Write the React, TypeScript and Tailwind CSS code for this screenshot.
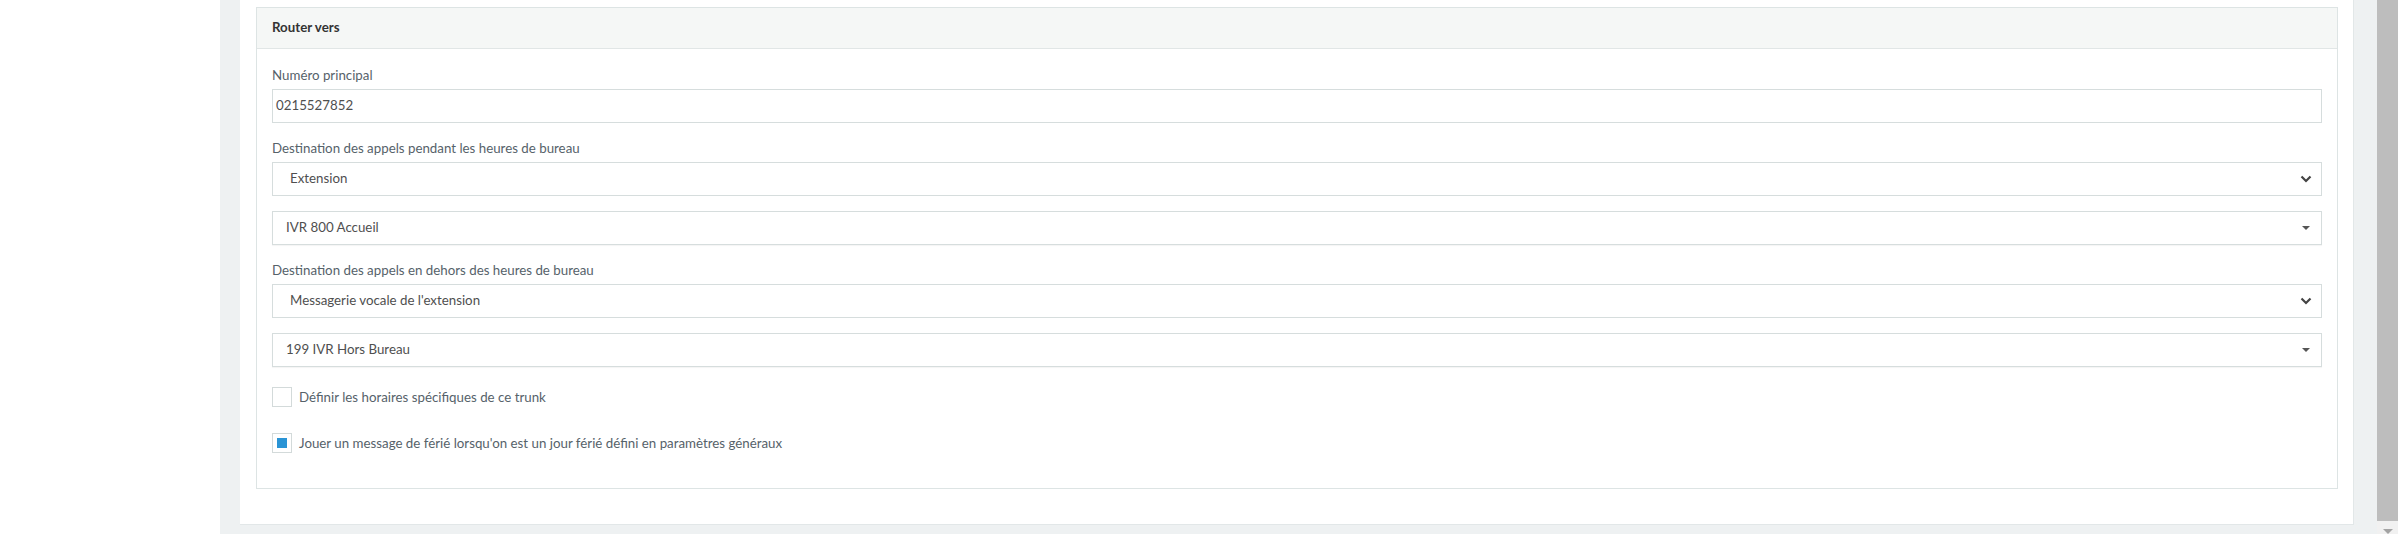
import React from 'react'

const font = { fontFamily: 'Lato, "Liberation Sans", sans-serif' }

const Chevron = () => (
    <svg width="12" height="8" viewBox="0 0 12 8" className="shrink-0">
        <polyline points="1.5,1.5 6,6 10.5,1.5" fill="none" stroke="#444" strokeWidth="2.2" />
    </svg>
)

const Caret = () => (
    <svg width="8" height="4" viewBox="0 0 8 4" className="shrink-0">
        <polygon points="0,0 8,0 4,4" fill="#555" />
    </svg>
)

const Label = ({ children }: { children: React.ReactNode }) => (
    <div className="text-[13.3px] leading-[18px] text-[#56626a] mb-[5px]">{children}</div>
)

const NativeSelect = ({ value }: { value: string }) => (
    <div className="h-[34px] border border-[#d6dddd] bg-white flex items-center justify-between pl-[17px] pr-[9px] text-[13.3px] text-[#4f4f4f]">
        <span>{value}</span>
        <Chevron />
    </div>
)

const Select2 = ({ value }: { value: string }) => (
    <div className="h-[34px] border border-[#d6dddd] bg-white flex items-center justify-between pl-[13px] pr-[11px] text-[13.3px] text-[#4f4f4f] shadow-[0_1px_1px_rgba(0,0,0,0.04)]">
        <span>{value}</span>
        <Caret />
    </div>
)

const Checkbox = ({ checked, label }: { checked?: boolean; label: string }) => (
    <div className="flex items-center gap-[7px] h-[20px]">
        <div className="w-[20px] h-[20px] shrink-0 border border-[#d3dada] bg-white flex items-center justify-center">
            {checked && <div className="w-[10px] h-[10px] bg-[#2a94d5]" />}
        </div>
        <span className="text-[13.3px] leading-[18px] text-[#56626a]">{label}</span>
    </div>
)

export default function App() {
    return (
        <div style={font} className="flex w-full h-[534px] overflow-hidden bg-white">
            {/* zone blanche à gauche */}
            <div className="w-[220px] shrink-0 bg-white" />

            {/* contenu */}
            <div className="flex-1 min-w-0 bg-[#eef1f2] pl-[20px] pr-[23px] pb-[9px] flex flex-col justify-end">
                <div className="bg-white border-r border-b border-[#e2e7e8] pl-[16px] pr-[15px] pt-[7px] pb-[35px]">
                    <div className="border border-[#dde4e4] bg-white">
                        <div className="h-[41px] bg-[#f5f7f6] border-b border-[#e1e6e6] px-[15px] flex items-center text-[13.3px] font-bold text-[#333]">
                            Router vers
                        </div>

                        <div className="px-[15px] pt-[17px] pb-[35px]">
                            <Label>Numéro principal</Label>
                            <div className="h-[34px] border border-[#d6dddd] flex items-center pl-[3px] text-[13.3px] text-[#4f4f4f]">
                                0215527852
                            </div>

                            <div className="mt-[16px]">
                                <Label>Destination des appels pendant les heures de bureau</Label>
                                <NativeSelect value="Extension" />
                                <div className="mt-[15px]">
                                    <Select2 value="IVR 800 Accueil" />
                                </div>
                            </div>

                            <div className="mt-[16px]">
                                <Label>Destination des appels en dehors des heures de bureau</Label>
                                <NativeSelect value="Messagerie vocale de l'extension" />
                                <div className="mt-[15px]">
                                    <Select2 value="199 IVR Hors Bureau" />
                                </div>
                            </div>

                            <div className="mt-[20px] flex flex-col gap-[26px]">
                                <Checkbox label="Définir les horaires spécifiques de ce trunk" />
                                <Checkbox checked label="Jouer un message de férié lorsqu'on est un jour férié défini en paramètres généraux" />
                            </div>
                        </div>
                    </div>
                </div>
            </div>

            {/* barre de défilement */}
            <div className="w-[21px] shrink-0 bg-[#f1f1f1] flex flex-col">
                <div className="flex-1 bg-[#bdbdbd]" />
                <div className="h-[13px] shrink-0 flex items-end justify-center">
                    <svg width="10" height="5" viewBox="0 0 10 5">
                        <polygon points="0,0 10,0 5,5" fill="#a3a3a3" />
                    </svg>
                </div>
            </div>
        </div>
    )
}
